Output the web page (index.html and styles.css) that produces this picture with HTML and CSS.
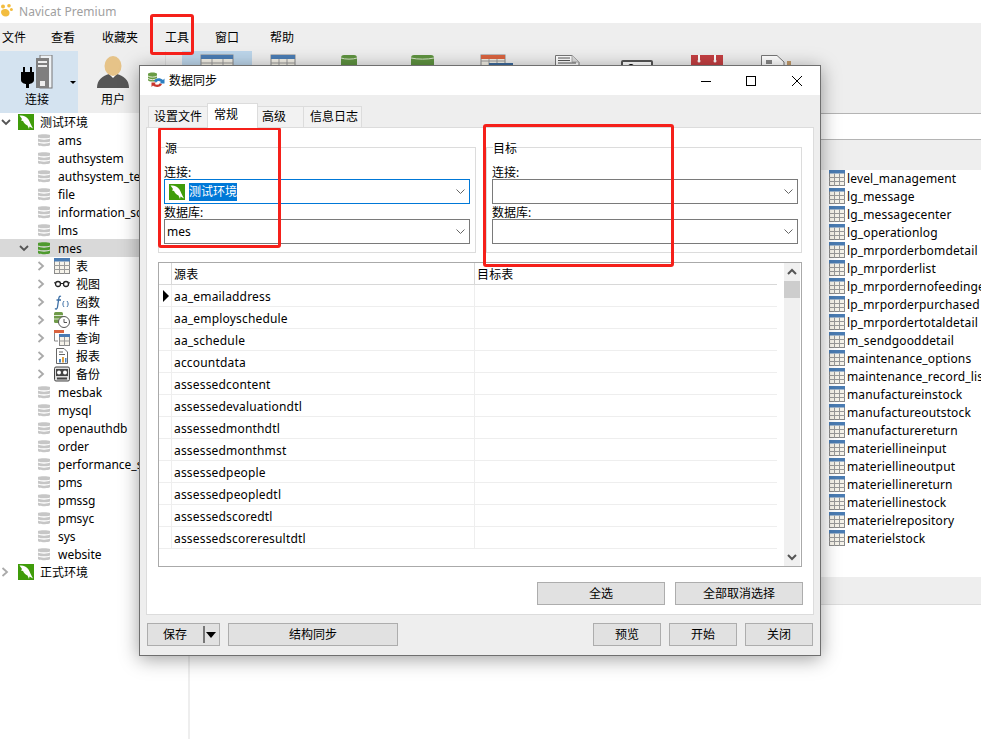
FILE: index.html
```html
<!DOCTYPE html>
<html lang="zh-CN">
<head>
<meta charset="utf-8">
<title>Navicat Premium</title>
<link rel="stylesheet" href="styles.css">
</head>
<body>
<svg class="defs" aria-hidden="true">
  <symbol id="i-conn" viewBox="0 0 16 16">
    <rect width="16" height="16" fill="#3f9c0a"/>
    <path d="M1.500 1.500C5 1 8.500 2.500 10.500 5.500C12 8 13 11 15 14.500L11.500 12.500L11 15L9.500 11.500C7.500 10.500 6 9 5 7L3 6.500L4 5C3.200 3.800 2.400 2.600 1.500 1.500Z" fill="#fff"/>
  </symbol>
  <symbol id="i-db" viewBox="0 0 12 14">
    <path d="M0 2.200C0 .8 12 .8 12 2.200V4.200C12 5.600 0 5.600 0 4.200Z M0 5.600C2 7 10 7 12 5.600V8.200C12 9.600 0 9.600 0 8.200Z M0 9.600C2 11 10 11 12 9.600V12C12 13.600 0 13.600 0 12Z" fill="currentColor"/>
  </symbol>
  <symbol id="i-table" viewBox="0 0 16 16">
    <rect x=".5" y=".5" width="15" height="15" fill="#f6f3ea" stroke="#8a8a8a"/>
    <rect width="16" height="3.500" fill="#4a7cb3"/>
    <path d="M0 7.500H16M0 11.500H16M5.500 3.500V16M10.500 3.500V16" stroke="#9a9a9a" fill="none"/>
  </symbol>
  <symbol id="i-chev" viewBox="0 0 10 10">
    <path d="M1.500 1L6 5L1.500 9" fill="none" stroke="currentColor" stroke-width="1.800"/>
  </symbol>
  <symbol id="i-open" viewBox="0 0 10 10">
    <path d="M1 3L5 7L9 3" fill="none" stroke="currentColor" stroke-width="1.800"/>
  </symbol>
  <symbol id="i-drop" viewBox="0 0 9 6">
    <path d="M.5 .5L4.500 4.500L8.500 .5" fill="none" stroke="#666" stroke-width="1"/>
  </symbol>
</svg>

<div class="app">
  <header class="titlebar">
    <svg class="app-logo" width="13" height="13" viewBox="0 0 13 13" aria-hidden="true">
      <circle cx="3" cy="2.500" r="2" fill="#f3bd3f"/><circle cx="9" cy="1.800" r="1.800" fill="#f3bd3f"/><circle cx="11.400" cy="5.600" r="1.500" fill="#f3bd3f"/><path d="M1 8C1 5 6 4 8.500 6.500C10.500 8.500 9.500 12.500 6 12.500C3 12.500 1 10.500 1 8Z" fill="#f3bd3f"/>
    </svg>
    <span>Navicat Premium</span>
  </header>

  <nav class="menubar">
    <span>文件</span><span class="menu-view">查看</span><span class="menu-fav">收藏夹</span><span class="menu-tools">工具</span><span>窗口</span><span class="menu-help">帮助</span>
  </nav>

  <div class="toolbar">
    <div class="tool tool-active">
      <svg width="78" height="36" viewBox="0 0 78 36" aria-hidden="true">
        <rect x="40" y="0" width="12" height="33" fill="#eef2f5" stroke="#777"/>
        <rect x="36" y="3" width="13" height="30" fill="#7f7f7f"/>
        <rect x="38" y="6" width="9" height="2" fill="#eee"/><rect x="38" y="10" width="9" height="2" fill="#eee"/>
        <rect x="40" y="26" width="5" height="5" fill="#eee"/>
        <path d="M24 12V17M31 12V17" stroke="#000" stroke-width="2"/>
        <path d="M21 17H34V25C34 28 30 29 29 29V33H26V29C25 29 21 28 21 25Z" fill="#000"/>
        <path d="M70 26H76L73 29Z" fill="#000"/>
      </svg>
      <span>连接</span>
    </div>
    <div class="tool tool-user">
      <svg width="36" height="36" viewBox="0 0 36 36" aria-hidden="true">
        <path d="M2 33C2 24 8 21 14 19H22C28 21 34 24 34 33Z" fill="#565656"/>
        <path d="M14 19H22L18 23Z" fill="#fff"/>
        <ellipse cx="18" cy="11" rx="8.500" ry="10" fill="#e6c388"/>
      </svg>
      <span>用户</span>
    </div>
    <div class="tool-sep"></div>
    <svg class="tool-strip" width="630" height="62" viewBox="0 0 630 62" aria-hidden="true">
      <rect x="0" y="0" width="70" height="62" fill="#bcd5ea"/>
      <rect x="19" y="4" width="32" height="30" fill="#f3f0e6" stroke="#888"/><rect x="19" y="4" width="32" height="4" fill="#4a7cb3"/><path d="M19 12H51M30 8V34M41 8V34" stroke="#999"/>
      <rect x="89" y="4" width="24" height="30" fill="#f3f0e6" stroke="#888"/><rect x="89" y="4" width="24" height="4" fill="#4a7cb3"/><path d="M89 12H113M97 8V34M105 8V34" stroke="#999"/>
      <rect x="159" y="4" width="16" height="30" rx="3" fill="#5f9340"/><path d="M159 7C163 8.500 171 8.500 175 7" stroke="#d8e6cc" fill="none"/>
      <rect x="229" y="4" width="23" height="30" rx="3" fill="#5f9340"/><path d="M229 7C235 8.500 246 8.500 252 7" stroke="#d8e6cc" fill="none"/>
      <rect x="299" y="4" width="24" height="30" fill="#f3f0e6" stroke="#888"/><rect x="299" y="4" width="24" height="4" fill="#d9633f"/><path d="M299 10H323M307 8V34M315 8V34" stroke="#999"/><rect x="307" y="12" width="24" height="22" fill="#3d6a9c"/>
      <path d="M373.500 4.500H390L397 11V34H373.500Z" fill="#fff" stroke="#777"/><path d="M390 4.500V11H397" fill="#ddd" stroke="#aaa"/><path d="M376 7H388M376 9.500H388M376 12H394" stroke="#555"/>
      <rect x="440" y="10" width="30" height="24" rx="1" fill="#fff" stroke="#555" stroke-width="2"/><circle cx="449" cy="16" r="3" fill="#000"/>
      <rect x="509" y="4" width="32" height="30" fill="#c43f42"/><rect x="516" y="4" width="2" height="6" fill="#fff"/><rect x="532" y="4" width="2" height="6" fill="#fff"/><circle cx="517" cy="10" r="1.500" fill="#fff"/><circle cx="533" cy="10" r="1.500" fill="#fff"/>
      <path d="M579.500 4.500H595L602 11V34H579.500Z" fill="#fff" stroke="#777"/><rect x="584" y="9" width="6" height="4" fill="#888"/><rect x="605" y="10" width="4" height="8" fill="#c19a6b"/>
    </svg>
  </div>

  <main class="workspace">
    <aside class="sidebar">
      <div class="row row-conn"><svg class="chev chev-dark"><use href="#i-open"/></svg><svg class="ic16"><use href="#i-conn"/></svg><span>测试环境</span></div>
      <div class="row row-db"><span class="slot"></span><svg class="ic-db"><use href="#i-db"/></svg><span>ams</span></div>
      <div class="row row-db"><span class="slot"></span><svg class="ic-db"><use href="#i-db"/></svg><span>authsystem</span></div>
      <div class="row row-db"><span class="slot"></span><svg class="ic-db"><use href="#i-db"/></svg><span>authsystem_test</span></div>
      <div class="row row-db"><span class="slot"></span><svg class="ic-db"><use href="#i-db"/></svg><span>file</span></div>
      <div class="row row-db"><span class="slot"></span><svg class="ic-db"><use href="#i-db"/></svg><span>information_schema</span></div>
      <div class="row row-db"><span class="slot"></span><svg class="ic-db"><use href="#i-db"/></svg><span>lms</span></div>
      <div class="row row-db row-selected"><span class="slot"><svg class="chev chev-dark"><use href="#i-open"/></svg></span><svg class="ic-db ic-db-on"><use href="#i-db"/></svg><span>mes</span></div>

      <div class="row row-obj"><span class="slot-obj"><svg class="chev"><use href="#i-chev"/></svg></span><svg class="ic16"><use href="#i-table"/></svg><span>表</span></div>
      <div class="row row-obj"><span class="slot-obj"><svg class="chev"><use href="#i-chev"/></svg></span>
        <svg class="ic16" viewBox="0 0 16 16" aria-hidden="true"><circle cx="4" cy="8" r="2.500" fill="none" stroke="#222" stroke-width="1.300"/><circle cx="12" cy="8" r="2.500" fill="none" stroke="#222" stroke-width="1.300"/><path d="M6.500 7.500H9.500M1.500 7.500L0 6.500M14.500 7.500L16 6.500" stroke="#222"/></svg><span>视图</span></div>
      <div class="row row-obj"><span class="slot-obj"><svg class="chev"><use href="#i-chev"/></svg></span>
        <svg class="ic16" viewBox="0 0 16 16" aria-hidden="true"><path d="M7 2.500C5.500 1.500 5 3 4.700 5L3.500 13C3.200 15 2 15.500 1 14.500M2.500 6H7" fill="none" stroke="#3b6ea5" stroke-width="1.300"/><path d="M10 7C8.500 9 8.500 11 10 13M13 7C14.500 9 14.500 11 13 13" fill="none" stroke="#3b6ea5"/></svg><span>函数</span></div>
      <div class="row row-obj"><span class="slot-obj"><svg class="chev"><use href="#i-chev"/></svg></span>
        <svg class="ic16" viewBox="0 0 16 16" aria-hidden="true"><rect x="0" y="0" width="9" height="11" rx="1.500" fill="#6f9a48"/><path d="M0 3.500H9M0 7H9" stroke="#dfe9d4"/><circle cx="10" cy="10" r="5.500" fill="#fff" stroke="#555"/><path d="M10 7V10.500H13" fill="none" stroke="#555"/></svg><span>事件</span></div>
      <div class="row row-obj"><span class="slot-obj"><svg class="chev"><use href="#i-chev"/></svg></span>
        <svg class="ic16" viewBox="0 0 16 16" aria-hidden="true"><rect x="0" y="0" width="10" height="3" fill="#d9633f"/><path d="M.5 3V11H4" fill="none" stroke="#888"/><rect x="5.500" y="4.500" width="10" height="11" fill="#f6f3ea" stroke="#888"/><rect x="5" y="4" width="11" height="3" fill="#4a7cb3"/><path d="M5.500 11H15.500M10.500 7V15.500" stroke="#999"/></svg><span>查询</span></div>
      <div class="row row-obj"><span class="slot-obj"><svg class="chev"><use href="#i-chev"/></svg></span>
        <svg class="ic16" viewBox="0 0 16 16" aria-hidden="true"><path d="M2.500 .5H10L13.500 4V15.500H2.500Z" fill="#fff" stroke="#666"/><path d="M5 4H9M5 6.500H11" stroke="#666"/><rect x="5" y="11" width="2" height="3.500" fill="#4a86c5"/><rect x="8" y="9" width="2" height="5.500" fill="#e0a040"/><rect x="11" y="10" width="1.500" height="4.500" fill="#4a86c5"/></svg><span>报表</span></div>
      <div class="row row-obj"><span class="slot-obj"><svg class="chev"><use href="#i-chev"/></svg></span>
        <svg class="ic16" viewBox="0 0 16 16" aria-hidden="true"><rect x=".5" y="1" width="15" height="14" rx="1.500" fill="#ddd" stroke="#444"/><rect x="2" y="3" width="12" height="7" fill="#444"/><circle cx="5" cy="6.500" r="2" fill="#fff"/><circle cx="11" cy="6.500" r="2" fill="#fff"/><path d="M3 12.500H13" stroke="#444" stroke-width="2"/></svg><span>备份</span></div>

      <div class="row row-db"><span class="slot"></span><svg class="ic-db"><use href="#i-db"/></svg><span>mesbak</span></div>
      <div class="row row-db"><span class="slot"></span><svg class="ic-db"><use href="#i-db"/></svg><span>mysql</span></div>
      <div class="row row-db"><span class="slot"></span><svg class="ic-db"><use href="#i-db"/></svg><span>openauthdb</span></div>
      <div class="row row-db"><span class="slot"></span><svg class="ic-db"><use href="#i-db"/></svg><span>order</span></div>
      <div class="row row-db"><span class="slot"></span><svg class="ic-db"><use href="#i-db"/></svg><span>performance_schema</span></div>
      <div class="row row-db"><span class="slot"></span><svg class="ic-db"><use href="#i-db"/></svg><span>pms</span></div>
      <div class="row row-db"><span class="slot"></span><svg class="ic-db"><use href="#i-db"/></svg><span>pmssg</span></div>
      <div class="row row-db"><span class="slot"></span><svg class="ic-db"><use href="#i-db"/></svg><span>pmsyc</span></div>
      <div class="row row-db"><span class="slot"></span><svg class="ic-db"><use href="#i-db"/></svg><span>sys</span></div>
      <div class="row row-db"><span class="slot"></span><svg class="ic-db"><use href="#i-db"/></svg><span>website</span></div>
      <div class="row row-conn"><svg class="chev"><use href="#i-chev"/></svg><svg class="ic16"><use href="#i-conn"/></svg><span>正式环境</span></div>
    </aside>
    <div class="splitter"></div>
    <section class="content">
      <div class="content-head"></div>
      <div class="content-band"></div>
      <ul class="objects">
        <li><svg class="ic16"><use href="#i-table"/></svg>level_management</li>
        <li><svg class="ic16"><use href="#i-table"/></svg>lg_message</li>
        <li><svg class="ic16"><use href="#i-table"/></svg>lg_messagecenter</li>
        <li><svg class="ic16"><use href="#i-table"/></svg>lg_operationlog</li>
        <li><svg class="ic16"><use href="#i-table"/></svg>lp_mrporderbomdetail</li>
        <li><svg class="ic16"><use href="#i-table"/></svg>lp_mrporderlist</li>
        <li><svg class="ic16"><use href="#i-table"/></svg>lp_mrpordernofeedinge</li>
        <li><svg class="ic16"><use href="#i-table"/></svg>lp_mrporderpurchased</li>
        <li><svg class="ic16"><use href="#i-table"/></svg>lp_mrpordertotaldetail</li>
        <li><svg class="ic16"><use href="#i-table"/></svg>m_sendgooddetail</li>
        <li><svg class="ic16"><use href="#i-table"/></svg>maintenance_options</li>
        <li><svg class="ic16"><use href="#i-table"/></svg>maintenance_record_lis</li>
        <li><svg class="ic16"><use href="#i-table"/></svg>manufactureinstock</li>
        <li><svg class="ic16"><use href="#i-table"/></svg>manufactureoutstock</li>
        <li><svg class="ic16"><use href="#i-table"/></svg>manufacturereturn</li>
        <li><svg class="ic16"><use href="#i-table"/></svg>materiellineinput</li>
        <li><svg class="ic16"><use href="#i-table"/></svg>materiellineoutput</li>
        <li><svg class="ic16"><use href="#i-table"/></svg>materiellinereturn</li>
        <li><svg class="ic16"><use href="#i-table"/></svg>materiellinestock</li>
        <li><svg class="ic16"><use href="#i-table"/></svg>materielrepository</li>
        <li><svg class="ic16"><use href="#i-table"/></svg>materielstock</li>
      </ul>
      <div class="content-foot"></div>
    </section>
  </main>

  <div class="dialog">
    <div class="dlg-title">
      <svg class="dlg-icon" width="17" height="17" viewBox="0 0 17 17" aria-hidden="true">
        <path d="M0 2C0 0 9 0 9 2V8C9 10 0 10 0 8Z" fill="#6a9c45"/><path d="M0 4C2 5.500 7 5.500 9 4M0 6.500C2 8 7 8 9 6.500" stroke="#e3edd9" fill="none"/>
        <path d="M6 9C7 6 12 5 15 8L16.500 6.500V11.500H11.500L13 10C11 8.500 9 9 8.500 10.500Z" fill="#2d7fc1"/>
        <path d="M14 12C13 15 8 16 5 13.500L3.500 15V10.500H8L6.700 12C8.500 13 10.500 13 11.500 11.500Z" fill="#c8352b"/>
      </svg>
      <span class="dlg-name">数据同步</span>
      <svg class="dlg-controls" width="110" height="12" viewBox="0 0 110 12" aria-hidden="true">
        <path d="M0 6.500H10" stroke="#000"/>
        <rect x="45.500" y="1.500" width="9" height="9" fill="none" stroke="#000"/>
        <path d="M91 1L101 11M101 1L91 11" stroke="#000" fill="none"/>
      </svg>
    </div>
    <div class="dlg-body">
      <div class="tabs">
        <span class="tab">设置文件</span>
        <span class="tab tab-on">常规</span>
        <span class="tab tab-adv">高级</span>
        <span class="tab tab-log">信息日志</span>
      </div>
      <div class="panel">
        <div class="groups">
          <div class="group">
            <span class="legend">源</span>
            <label class="field-label">连接:</label>
            <div class="combo combo-focus">
              <svg class="ic16"><use href="#i-conn"/></svg><span class="selected">测试环境</span>
              <svg class="drop"><use href="#i-drop"/></svg>
            </div>
            <label class="field-label">数据库:</label>
            <div class="combo"><span class="combo-text">mes</span><svg class="drop"><use href="#i-drop"/></svg></div>
          </div>
          <div class="group group-target">
            <span class="legend">目标</span>
            <label class="field-label">连接:</label>
            <div class="combo"><svg class="drop"><use href="#i-drop"/></svg></div>
            <label class="field-label">数据库:</label>
            <div class="combo"><svg class="drop"><use href="#i-drop"/></svg></div>
          </div>
        </div>

        <div class="grid-box">
          <div class="grid">
            <div class="grow grow-head"><span></span><span>源表</span><span>目标表</span></div>
            <div class="grow"><span><i class="cursor"></i></span><span>aa_emailaddress</span><span></span></div>
            <div class="grow"><span></span><span>aa_employschedule</span><span></span></div>
            <div class="grow"><span></span><span>aa_schedule</span><span></span></div>
            <div class="grow"><span></span><span>accountdata</span><span></span></div>
            <div class="grow"><span></span><span>assessedcontent</span><span></span></div>
            <div class="grow"><span></span><span>assessedevaluationdtl</span><span></span></div>
            <div class="grow"><span></span><span>assessedmonthdtl</span><span></span></div>
            <div class="grow"><span></span><span>assessedmonthmst</span><span></span></div>
            <div class="grow"><span></span><span>assessedpeople</span><span></span></div>
            <div class="grow"><span></span><span>assessedpeopledtl</span><span></span></div>
            <div class="grow"><span></span><span>assessedscoredtl</span><span></span></div>
            <div class="grow"><span></span><span>assessedscoreresultdtl</span><span></span></div>
          </div>
          <div class="scrollbar">
            <svg class="sb-arrow" viewBox="0 0 16 18" aria-hidden="true"><path d="M4 11L8 7L12 11" fill="none" stroke="#555" stroke-width="2"/></svg>
            <div class="sb-thumb"></div>
            <div class="sb-track"></div>
            <svg class="sb-arrow" viewBox="0 0 16 18" aria-hidden="true"><path d="M4 7L8 11L12 7" fill="none" stroke="#555" stroke-width="2"/></svg>
          </div>
        </div>

        <div class="select-actions">
          <button class="btn btn-wide">全选</button>
          <button class="btn btn-wide">全部取消选择</button>
        </div>
      </div>

      <div class="dlg-foot">
        <button class="btn btn-save"><span class="save-label">保存</span><i class="save-sep"></i><i class="save-arrow"></i></button>
        <button class="btn btn-struct">结构同步</button>
        <span class="foot-space"></span>
        <button class="btn btn-foot">预览</button>
        <button class="btn btn-foot">开始</button>
        <button class="btn btn-foot">关闭</button>
      </div>
    </div>
  </div>

  <div class="mark mark-menu"></div>
  <div class="mark mark-source"></div>
  <div class="mark mark-target"></div>
</div>
</body>
</html>
```

FILE: styles.css
```css
* { box-sizing: border-box; }
html, body { margin: 0; padding: 0; }
body {
  width: 981px;
  height: 739px;
  overflow: hidden;
  background: #fff;
  color: #000;
  font: 12px/16px "Noto Sans", "Noto Sans CJK SC", sans-serif;
}
.defs { display: block; width: 0; height: 0; overflow: hidden; }
.app { position: relative; width: 981px; height: 739px; display: flex; flex-direction: column; overflow: hidden; }

/* title + menu */
.titlebar { height: 23px; display: flex; align-items: center; gap: 6px; color: #a0a0a0; font-size: 12px; letter-spacing: .05px; }
.app-logo { margin-top: -2px; }
.menubar { height: 28px; background: #eee; display: flex; align-items: center; gap: 26px; padding: 1px 0 0 2px; flex: none; }
.menu-view { margin-left: -1px; }
.menu-fav { margin-left: 1px; }
.menu-tools { margin-left: 1px; }
.menu-help { margin-left: 5px; }

/* toolbar */
.toolbar { height: 62px; background: #eee; display: flex; align-items: stretch; flex: none; }
.tool { width: 70px; padding-top: 4px; display: flex; flex-direction: column; align-items: center; }
.tool svg { display: block; height: 36px; flex: none; }
.tool span { margin-top: 1px; }
.tool-active { width: 78px; background: #d4e3f0; }
.tool-active span { margin-right: 4px; }
.tool-user { width: 70px; }
.tool-sep { width: 1px; margin: 0 0 0 17px; background: #ddd; }
.tool-strip { display: block; margin-left: 16px; flex: none; }

/* workspace */
.workspace { flex: 1; display: flex; min-height: 0; }
.sidebar { width: 188px; flex: none; overflow: hidden; }
.splitter { width: 2px; background: #eee; flex: none; }
.content { flex: 1; display: flex; flex-direction: column; min-width: 0; }
.content-head { height: 27px; border-top: 1px solid #b4b4b4; border-bottom: 1px solid #b4b4b4; flex: none; }
.content-band { height: 30px; background: #eee; flex: none; }
.objects { list-style: none; margin: 0; padding: 0 0 0 639px; height: 407px; flex: none; letter-spacing: .15px; overflow: hidden; }
.objects li { height: 18px; display: flex; align-items: center; gap: 2px; white-space: nowrap; }
.objects .ic16 { margin-top: -2px; }
.content-foot { height: 28px; background: #eee; border-bottom: 1px solid #ddd; flex: none; }

/* tree */
.row { height: 18px; display: flex; align-items: center; white-space: nowrap; }
.row > span:last-child { padding-top: 2px; }
.row-conn { gap: 6px; }
.row-selected { background: #d9d9d9; }
.slot { width: 38px; flex: none; display: flex; padding-left: 18px; }
.slot-obj { width: 54px; flex: none; display: flex; padding-left: 36px; }
.row-obj > span:last-child { margin-left: 6px; }
.row-db > span:last-child { margin-left: 8px; }
.chev { display: block; width: 12px; height: 10px; color: #aaa; flex: none; }
.chev-dark { color: #555; }
.ic16 { display: block; width: 16px; height: 16px; flex: none; }
.ic-db { display: block; width: 12px; height: 14px; color: #c6c6c6; flex: none; }
.ic-db-on { color: #4e9a2e; }

/* dialog */
.dialog {
  position: absolute;
  left: 139px; top: 65px;
  width: 682px; height: 591px;
  border: 1px solid #6f6f6f;
  background: #eee;
  box-shadow: 0 3px 18px rgba(0, 0, 0, .38);
  display: flex; flex-direction: column;
}
.dlg-title { height: 29px; background: #fff; display: flex; align-items: center; flex: none; }
.dlg-icon { margin-left: 8px; flex: none; }
.dlg-name { margin-left: 4px; }
.dlg-controls { margin-left: auto; margin-right: 9px; }
.dlg-body { flex: 1; padding: 8px 6px 9px; display: flex; flex-direction: column; min-height: 0; }

.tabs { height: 25px; display: flex; align-items: flex-end; padding-left: 2px; flex: none; position: relative; margin-bottom: -1px; z-index: 1; }
.tab { height: 22px; width: 60px; padding-left: 5px; background: #f2f2f2; border: 1px solid #dcdcdc; margin-right: -1px; display: flex; align-items: center; }
.tab-on { height: 25px; width: 51px; background: #fff; border-bottom: 0; padding: 0 0 3px 6px; position: relative; }
.tab-adv { width: 47px; padding-left: 4px; }
.tab-log { width: 59px; padding-left: 6px; }

.panel { flex: 1; background: #fff; border: 1px solid #dcdcdc; padding: 19px 11px 0; display: flex; flex-direction: column; min-height: 0; }
.groups { display: grid; grid-template-columns: 318px 316px; column-gap: 10px; }
.group { position: relative; height: 106px; border: 1px solid #dcdcdc; padding: 16px 5px 0; }
.group-target { padding-right: 3px; }
.legend { position: absolute; left: 6px; top: -7px; background: #fff; line-height: 16px; }
.field-label { display: block; height: 15px; line-height: 17px; }
.combo { height: 25px; border: 1px solid #7a7a7a; background: #fff; display: flex; align-items: center; padding: 0 4px; }
.combo-focus { border-color: #0078d7; gap: 4px; }
.combo-text { margin-left: -2px; }
.selected { background: #0078d7; color: #fff; height: 18px; line-height: 18px; }
.drop { width: 9px; height: 6px; margin-left: auto; flex: none; }

.grid-box { margin-top: 9px; height: 305px; border: 1px solid #aaa; display: flex; flex: none; }
.grid { width: 618px; flex: none; }
.grow { height: 22px; display: grid; grid-template-columns: 13px 303px 302px; border-bottom: 1px solid #eee; align-items: stretch; }
.grow > span { border-right: 1px solid #eee; padding: 1px 0 0 2px; line-height: 21px; white-space: nowrap; overflow: hidden; display: block; letter-spacing: .18px; }
.grow > span:first-child { padding: 0; display: flex; align-items: center; justify-content: center; }
.grow > span:last-child { border-right: 0; }
.grow-head { border-bottom-color: #d8d8d8; }
.grow-head > span { border-right-color: #d8d8d8; }
.cursor { display: block; width: 0; height: 0; border: 6px solid transparent; border-left: 6px solid #000; border-right: 0; margin-left: 2px; }
.scrollbar { width: 16px; margin-left: 7px; background: #f0f0f0; display: flex; flex-direction: column; flex: none; }
.sb-arrow { display: block; width: 16px; height: 18px; flex: none; }
.sb-thumb { height: 17px; background: #cdcdcd; flex: none; }
.sb-track { flex: 1; }

.select-actions { display: flex; justify-content: flex-end; gap: 10px; margin-top: 15px; margin-right: -1px; }
.btn { font: inherit; color: #000; background: #e1e1e1; border: 1px solid #adadad; height: 23px; padding: 0; display: flex; align-items: center; justify-content: center; border-radius: 0; flex: none; }
.btn-wide { width: 128px; }
.dlg-foot { display: flex; gap: 8px; margin-top: 8px; flex: none; padding: 0 1px; }
.btn-save { width: 73px; justify-content: flex-start; padding-left: 15px; }
.save-sep { display: block; width: 2px; height: 17px; background: #777; margin-left: 16px; }
.save-arrow { display: block; width: 0; height: 0; border: 5.5px solid transparent; border-top: 6px solid #000; border-bottom: 0; margin-left: 1px; }
.btn-struct { width: 170px; }
.foot-space { flex: 1; }
.btn-foot { width: 68px; }

/* red annotation rectangles */
.mark { position: absolute; border: 3px solid #f5201a; border-radius: 3px; pointer-events: none; }
.mark-menu { left: 150px; top: 14px; width: 44px; height: 41px; }
.mark-source { left: 158px; top: 127px; width: 123px; height: 121px; }
.mark-target { left: 483px; top: 124px; width: 191px; height: 143px; }
```
